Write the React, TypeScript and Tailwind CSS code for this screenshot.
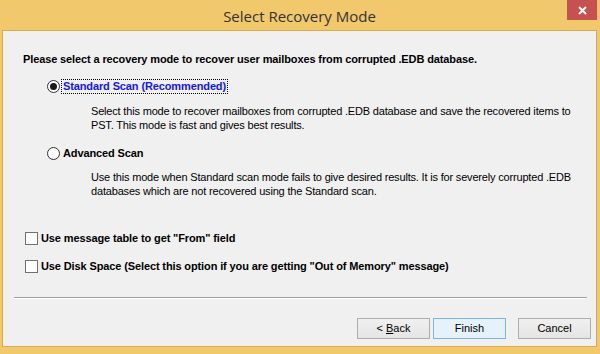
import { useState } from "react";

const bodyFont = { fontFamily: '"Liberation Sans", Arial, sans-serif' };

function Radio({ checked }: { checked: boolean }) {
  return (
    <span className="flex h-[13px] w-[13px] shrink-0 items-center justify-center rounded-full border border-[#333333] bg-white">
      {checked && <span className="h-[7px] w-[7px] rounded-full bg-[#1a1a1a]" />}
    </span>
  );
}

function Checkbox() {
  return <span className="h-[13px] w-[13px] shrink-0 border border-[#707070] bg-white" />;
}

function Button({ children, primary }: { children: React.ReactNode; primary?: boolean }) {
  return (
    <button
      type="button"
      className={
        primary
          ? "h-[21px] w-[73px] border border-[#7eb4ea] bg-[#e5f1fb] text-[11px] text-black"
          : "h-[21px] w-[73px] border border-[#adadad] bg-gradient-to-b from-[#f0f0f0] to-[#e5e5e5] text-[11px] text-black"
      }
    >
      {children}
    </button>
  );
}

export default function App() {
  const [mode] = useState<"standard" | "advanced">("standard");

  return (
    <div className="flex h-[354px] w-[600px] flex-col bg-[#f1c86b] pb-[7px] pl-[2px] pr-[3px]" style={bodyFont}>
      {/* Title bar */}
      <div className="relative flex h-[30px] shrink-0 items-center justify-center pt-[2px]">
        <span
          className="text-[15px] text-[#333333]"
          style={{ fontFamily: '"Open Sans", "Noto Sans", sans-serif' }}
        >
          Select Recovery Mode
        </span>
        <div className="absolute right-[0px] top-0 flex h-[20px] w-[30px] items-center justify-center bg-[#c75050]">
          <svg width="9" height="9" viewBox="0 0 9 9">
            <path d="M1 1 L8 8 M8 1 L1 8" stroke="white" strokeWidth="2" />
          </svg>
        </div>
      </div>

      {/* Client area */}
      <div className="flex flex-1 flex-col border border-[#d9ab4f] bg-[#f0f0f0] text-[11px] leading-[13px] text-black">
        <p className="ml-[20px] mt-[22px] font-bold tracking-[-0.12px]">
          Please select a recovery mode to recover user mailboxes from corrupted .EDB database.
        </p>

        <div className="ml-[44px] mt-[12px] flex h-[16px] items-center gap-[1px]">
          <Radio checked={mode === "standard"} />
          <span className="border border-dotted border-black px-[1px] font-bold tracking-[-0.12px] text-[#1515f5]">
            Standard Scan (Recommended)
          </span>
        </div>
        <p className="ml-[88px] mt-[11px] whitespace-nowrap leading-[13.5px] tracking-[-0.18px]">
          Select this mode to recover mailboxes from corrupted .EDB database and save the recovered items to
          <br />
          PST. This mode is fast and gives best results.
        </p>

        <div className="ml-[44px] mt-[13px] flex h-[16px] items-center gap-[3px]">
          <Radio checked={mode === "advanced"} />
          <span className="font-bold tracking-[-0.12px]">Advanced Scan</span>
        </div>
        <p className="ml-[88px] mt-[10px] whitespace-nowrap leading-[13.5px] tracking-[-0.18px]">
          Use this mode when Standard scan mode fails to give desired results. It is for severely corrupted .EDB
          <br />
          databases which are not recovered using the Standard scan.
        </p>

        <div className="ml-[22px] mt-[32px] flex h-[16px] items-center gap-[3px]">
          <Checkbox />
          <span className="font-bold tracking-[-0.12px]">Use message table to get "From" field</span>
        </div>
        <div className="ml-[22px] mt-[12px] flex h-[16px] items-center gap-[3px]">
          <Checkbox />
          <span className="font-bold tracking-[-0.12px]">
            Use Disk Space (Select this option if you are getting "Out of Memory" message)
          </span>
        </div>

        <div className="ml-[11px] mr-[9px] mt-[23px] border-b border-t border-b-white border-t-[#a0a0a0]" />

        <div className="mr-[5px] mt-[19px] flex justify-end">
          <div className="flex gap-[3px]">
            <Button>
              &lt; <span className="underline">B</span>ack
            </Button>
            <Button primary>Finish</Button>
          </div>
          <div className="ml-[12px]">
            <Button>Cancel</Button>
          </div>
        </div>
      </div>
    </div>
  );
}
